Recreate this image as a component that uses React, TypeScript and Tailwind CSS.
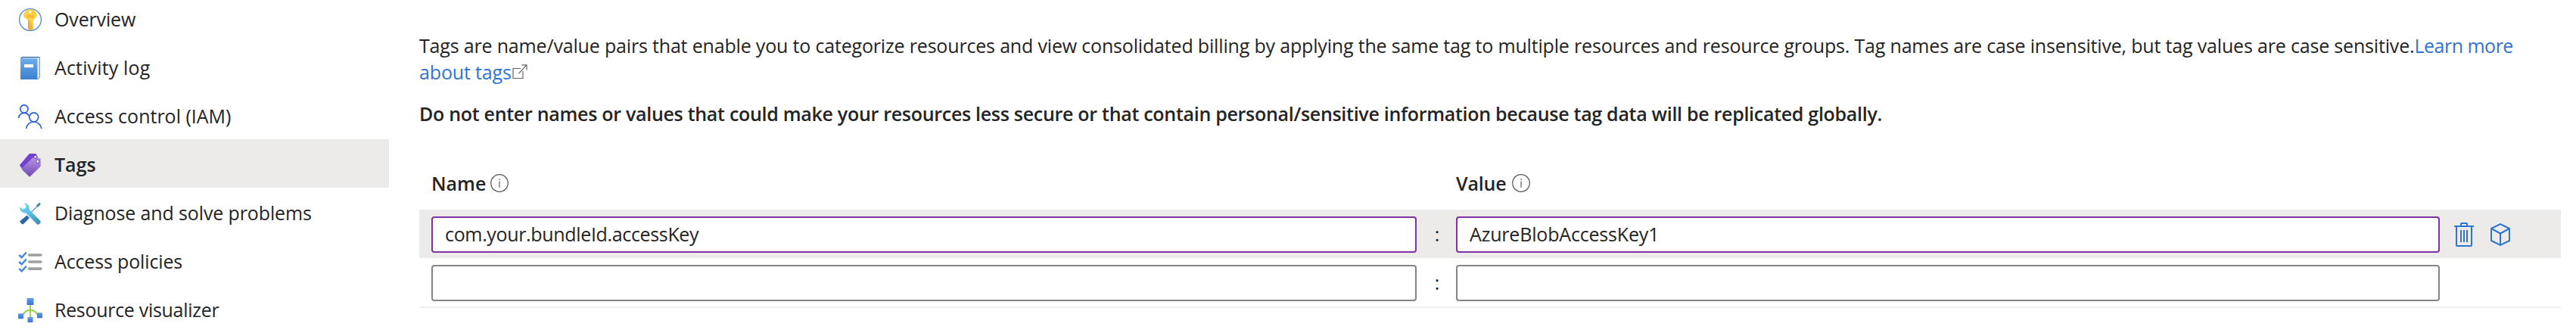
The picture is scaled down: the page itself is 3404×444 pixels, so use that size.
import { ReactNode } from 'react';

type IconProps = { className?: string };

const KeyIcon = ({ className }: IconProps) => (
  <svg viewBox="0 0 32 32" className={className}>
    <defs>
      <linearGradient id="key" x1="0" y1="0" x2="0" y2="1">
        <stop offset="0" stopColor="#f9cf3c" />
        <stop offset="0.5" stopColor="#fbd44a" />
        <stop offset="1" stopColor="#f2a52f" />
      </linearGradient>
    </defs>
    <circle cx="16" cy="16" r="14.4" fill="#fff" stroke="#4a8ade" strokeWidth="1.3" />
    <path d="M13.2 2.2h5.6a2 2 0 0 1 1.4.6l4 4.4a2 2 0 0 1 .5 1.4v2.6a2 2 0 0 1-.5 1.4L20 17v1.6l-1 1.2 1.2 1.2-.9 1.2.9 1.2-1 1.2 1 1.4v1.4L16.6 30.2h-1L13 27.600V17l-5.200-4.400a2 2 0 0 1-.6-1.400V8.600a2 2 0 0 1 .5-1.400l4.100-4.400a2 2 0 0 1 1.400-.6z" fill="url(#key)" />
    <path d="M13 17h2.200v12.600L13 27.600z" fill="#f2a52f" />
    <circle cx="15.8" cy="5.8" r="1.8" fill="#fff" />
    <path d="M11.300 10.700h9.400M11.300 12.700h9.400" stroke="#f0a030" strokeWidth="1" />
  </svg>
);

const BookIcon = ({ className }: IconProps) => (
  <svg viewBox="0 0 32 32" className={className}>
    <defs>
      <linearGradient id="book" x1="0" y1="0" x2="0" y2="1">
        <stop offset="0" stopColor="#6cabea" />
        <stop offset="1" stopColor="#3b80d0" />
      </linearGradient>
    </defs>
    <path d="M4.500 1H28.500V28l-2.500 3H3V3z" fill="#f4f6fa" />
    <path d="M3.500 3.500 5.800 1.600H28.500" fill="none" stroke="#2a5ca0" strokeWidth="1.3" />
    <path d="M28.200 1.500V28l-2.600 2.800" fill="none" stroke="#8fa5c8" strokeWidth="1.5" />
    <path d="M3 4.200a1 1 0 0 1 1-1h20.500a1 1 0 0 1 1 1V31H4a1 1 0 0 1-1-1z" fill="url(#book)" />
    <path d="M8 11h12v4.200H8z" fill="#fff" />
  </svg>
);

const PeopleIcon = ({ className }: IconProps) => (
  <svg viewBox="0 0 32 32" className={className}>
    <g fill="none" stroke="#2b62d9" strokeWidth="1.7">
      <circle cx="7.9" cy="5.9" r="5.1" />
      <circle cx="20.7" cy="16.8" r="6" />
      <path d="M.8 18C1 14.200 3.600 11.300 8 11.300c3 0 5 1 6.600 4" />
      <path d="M10.600 32c.6-5.200 4.700-9 10-9s9.600 3.800 10.300 9" />
    </g>
  </svg>
);

const TagIcon = ({ className }: IconProps) => (
  <svg viewBox="0 0 32 32" className={className}>
    <defs>
      <linearGradient id="tag" x1="0" y1="0" x2="0" y2="1">
        <stop offset="0" stopColor="#b796e6" />
        <stop offset="1" stopColor="#7248b5" />
      </linearGradient>
    </defs>
    <path d="M14 1.900a2.500 2.500 0 0 1 1.700-.8h7a1.500 1.500 0 0 1 1.300.9l2.500 6L8 25 2.400 17.300a1.500 1.500 0 0 1 .1-1.900z" fill="#7340d2" />
    <path d="M18.800 6.800a2 2 0 0 1 1.400-.6L28 6.800a1.700 1.700 0 0 1 1.700 1.700v8.500a2 2 0 0 1-.6 1.400L15.900 31a1.200 1.200 0 0 1-1.700 0L5 22.100a1.300 1.300 0 0 1 0-1.900z" fill="url(#tag)" />
    <circle cx="22.8" cy="5.2" r="2.1" fill="#fff" stroke="#4d2894" strokeWidth="1" />
    <circle cx="25.8" cy="11.2" r="2.1" fill="#fff" stroke="#6a41b0" strokeWidth="1" />
  </svg>
);

const ToolsIcon = ({ className }: IconProps) => (
  <svg viewBox="0 0 32 32" className={className}>
    <defs>
      <linearGradient id="wrench" x1="0" y1="0" x2="1" y2="1">
        <stop offset="0" stopColor="#74d6f5" />
        <stop offset="0.5" stopColor="#54bfe2" />
        <stop offset="1" stopColor="#3c86ad" />
      </linearGradient>
    </defs>
    <path d="M11.500 18.500 15 22 7 30a1.500 1.500 0 0 1-2 0L2.600 27.600a1.200 1.200 0 0 1 0-1.700z" fill="#2c66ac" />
    <path d="m16.500 14.500 7.700-7.700.6-2.300 3.500-2.700 1.500 1.500-2.600 3.600-2.400.8-7.600 7.600z" fill="#3d83b4" />
    <path d="M7.200 2.200A7.400 7.400 0 0 1 14.600 11l14.200 14.300a3.200 3.200 0 0 1-4.500 4.500L10.200 15.500A7.300 7.300 0 0 1 2.200 7.200L6.300 10.400l3.600-1.500.7-3.500z" fill="url(#wrench)" />
  </svg>
);

const ChecklistIcon = ({ className }: IconProps) => (
  <svg viewBox="0 0 32 32" className={className}>
    <g fill="none" stroke="#4583dc" strokeWidth="2.4">
      <path d="m1.200 7 3.500 3.200 6-6.700" />
      <path d="m1.200 16 3.500 3.200 6-6.700" />
      <path d="m1.200 25.200 3.500 3.200 6-6.700" />
    </g>
    <path d="M14.700 7h15.200M14.700 16h15.200M14.700 25.100h15.200" stroke="#9f9f9f" strokeWidth="3.6" strokeLinecap="round" />
  </svg>
);

const TreeIcon = ({ className }: IconProps) => (
  <svg viewBox="0 0 32 32" className={className}>
    <defs>
      <linearGradient id="node" x1="0" y1="0" x2="0" y2="1">
        <stop offset="0" stopColor="#639be8" />
        <stop offset="1" stopColor="#3678d0" />
      </linearGradient>
    </defs>
    <path d="M16 9v17M5.500 22.500 10 17.500q1.200-1.300 3-1.300h6q1.800 0 3 1.300l4.500 5" fill="none" stroke="#92d14a" strokeWidth="1.9" />
    <rect x="11.5" y="0" width="9" height="9" rx=".5" fill="url(#node)" />
    <rect x="0" y="20.2" width="7" height="7" rx=".4" fill="url(#node)" />
    <rect x="25" y="19.3" width="7" height="7" rx=".4" fill="url(#node)" />
    <rect x="12.5" y="25" width="7" height="7" rx=".4" fill="url(#node)" />
  </svg>
);

const InfoIcon = ({ className }: IconProps) => (
  <svg viewBox="0 0 24 24" className={className}>
    <circle cx="12" cy="12" r="11.3" fill="none" stroke="#555" strokeWidth="1.2" />
    <path d="M12 9.500v8.300M12 6.300v1.700" stroke="#666" strokeWidth="1.3" />
  </svg>
);

const ExternalIcon = ({ className }: IconProps) => (
  <svg viewBox="0 0 20 20" className={className}>
    <path d="M11 5.500H1v13h13V9M8.500 12 19 .8M12.500.8H19v7" fill="none" stroke="#666" strokeWidth="1.2" />
  </svg>
);

const TrashIcon = ({ className }: IconProps) => (
  <svg viewBox="0 0 26 32" className={className}>
    <g fill="none" stroke="#2f74d0" strokeWidth="2">
      <path d="M0 5h26" />
      <path d="M9 5V2q0-1 1-1h6q1 0 1 1v3" />
      <path d="M3 5v25q0 1 1 1h18q1 0 1-1V5" />
      <path d="M9 10v16M13 10v16M17 10v16" />
    </g>
  </svg>
);

const CubeIcon = ({ className }: IconProps) => (
  <svg viewBox="0 0 26 30" className={className}>
    <path d="M13 1.200 25 7v16L13 28.800 1 23V7zM1 7l12 6.500L25 7M13 13.500v15.300" fill="none" stroke="#2f74d0" strokeWidth="2" />
  </svg>
);

const menu: { label: string; icon: ReactNode; text: string; active?: boolean }[] = [
  { label: 'Overview', icon: <KeyIcon className="size-8" />, text: 'tracking-[-0.15px]' },
  { label: 'Activity log', icon: <BookIcon className="size-8" />, text: 'tracking-[0.15px]' },
  { label: 'Access control (IAM)', icon: <PeopleIcon className="size-8" />, text: '' },
  { label: 'Tags', icon: <TagIcon className="size-8" />, text: 'font-semibold', active: true },
  { label: 'Diagnose and solve problems', icon: <ToolsIcon className="size-8" />, text: 'tracking-[-0.13px]' },
  { label: 'Access policies', icon: <ChecklistIcon className="size-8" />, text: 'tracking-[-0.15px]' },
  { label: 'Resource visualizer', icon: <TreeIcon className="size-8" />, text: 'tracking-[-0.3px]' },
];

const intro =
  'Tags are name/value pairs that enable you to categorize resources and view consolidated billing by applying the same tag to multiple resources and resource groups. Tag names are case insensitive, but tag values are case sensitive.';
const warning =
  'Do not enter names or values that could make your resources less secure or that contain personal/sensitive information because tag data will be replicated globally.';

function TagRow({ name, value, filled }: { name: string; value: string; filled?: boolean }) {
  const border = filled ? 'border-[#8032a0]' : 'border-[#858585]';
  return (
    <div
      className={
        filled
          ? 'flex h-16 shrink-0 items-center bg-[#ecebea] pt-0.5 pl-4'
          : 'flex h-[66px] shrink-0 items-center border-b-2 border-[#f0f0f0] pt-0.5 pl-4'
      }
    >
      <div className={`flex h-12 w-[1302px] items-center rounded border-2 bg-white pb-0.5 pl-4 tracking-[-0.34px] ${border}`}>{name}</div>
      <span className="w-[52px] pb-0.5 pl-0.5 text-center">:</span>
      <div className={`flex h-12 w-[1300px] items-center rounded border-2 bg-white pb-0.5 pl-4 tracking-[-0.18px] ${border}`}>{value}</div>
      {filled && (
        <>
          <TrashIcon className="ml-[19px] h-8 w-[26px]" />
          <CubeIcon className="ml-[22px] h-[30px] w-[26px]" />
        </>
      )}
    </div>
  );
}

export default function App() {
  return (
    <div className="flex h-[444px] w-[3404px] overflow-hidden bg-white font-['Open_Sans','Noto_Sans',sans-serif] text-[25px] leading-[34px] text-[#242424]">
      <nav className="-mt-2 flex w-[514px] shrink-0 flex-col">
        {menu.map((m) => (
          <div
            key={m.label}
            className={
              m.active
                ? 'flex h-16 shrink-0 items-center gap-4 bg-[#ecebea] pt-1 pl-6'
                : 'flex h-16 shrink-0 items-center gap-4 pt-1 pl-6'
            }
          >
            {m.icon}
            <span className={`pb-0.5 ${m.text}`}>{m.label}</span>
          </div>
        ))}
      </nav>
      <main className="ml-10 flex w-[2830px] flex-col">
        <div className="mt-[43px] leading-[35px] whitespace-nowrap">
          <p className="h-[35px]">
            <span className="tracking-[-0.175px]">{intro}</span>
            <a className="tracking-[-0.5px] text-[#2f74d0]">Learn more</a>
          </p>
          <p className="flex h-[35px] items-center">
            <a className="tracking-[-0.15px] text-[#2f74d0]">about tags</a>
            <ExternalIcon className="mb-px ml-px size-5" />
          </p>
        </div>
        <p className="mt-5 h-[35px] leading-[35px] font-semibold tracking-[-0.29px] whitespace-nowrap">{warning}</p>
        <div className="mt-[57px] flex h-[52px] shrink-0 items-start pl-4 font-semibold">
          <div className="flex w-[1354px]">
            <span>Name</span>
            <InfoIcon className="mt-[5px] ml-1.5 size-6" />
          </div>
          <div className="flex">
            <span className="tracking-[-0.2px]">Value</span>
            <InfoIcon className="mt-[5px] ml-2 size-6" />
          </div>
        </div>
        <TagRow name="com.your.bundleId.accessKey" value="AzureBlobAccessKey1" filled />
        <TagRow name="" value="" />
      </main>
    </div>
  );
}
